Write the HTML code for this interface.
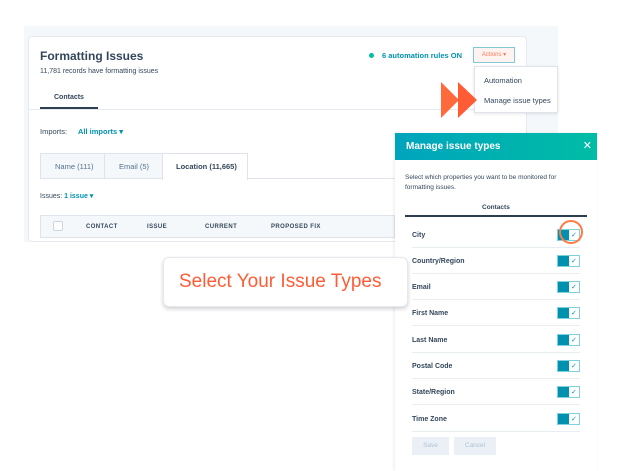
<!DOCTYPE html>
<html><head><style>
*{margin:0;padding:0;box-sizing:border-box}
body{width:637px;height:471px;background:#fff;position:relative;overflow:hidden;font-family:"Liberation Sans",sans-serif;color:#33475b}
.a{position:absolute}
.bg{left:24px;top:26px;width:534px;height:216px;background:#f5f8fa}
.card{left:28px;top:36px;width:499px;height:206px;background:#fff;border:1px solid #e5eaf0;border-radius:4px}
.teal{color:#0091ae;font-weight:bold}
.row{left:412px;width:168px;height:26px;border-bottom:1px solid #e8edf2;font-size:7px;font-weight:bold;color:#33475b;line-height:28px}
.tg{position:absolute;right:0;top:7px;width:23px;height:12px;border:1px solid #7fd1de;background:#fff}
.tg:before{content:"";position:absolute;left:0;top:0;width:11px;height:10px;background:#0091ae}
.tg:after{content:"✓";position:absolute;left:13px;top:-8px;font-size:7px;color:#0091ae;font-weight:normal}
</style></head><body>
<div class="a bg"></div>
<div class="a card"></div>
<div class="a" style="left:40px;top:49px;font-size:12px;font-weight:bold">Formatting Issues</div>
<div class="a" style="left:40px;top:68px;font-size:7px">11,781 records have formatting issues</div>
<div class="a" style="left:54px;top:94px;font-size:7px;font-weight:bold">Contacts</div>
<div class="a" style="left:40px;top:107px;width:58px;height:3px;background:#2d3e50"></div>
<div class="a" style="left:29px;top:109px;width:497px;height:1px;background:#e5eaf0"></div>
<div class="a" style="left:369px;top:53px;width:5px;height:5px;border-radius:50%;background:#00bda5"></div>
<div class="a teal" style="left:382px;top:51px;font-size:7.5px">6 automation rules ON</div>
<div class="a" style="left:473px;top:47px;width:42px;height:16px;border:1px solid #7fc8d6;background:#fef3f0;color:#ff7a59;font-size:6px;text-align:center;line-height:14px">Actions ▾</div>
<div class="a" style="left:474px;top:66px;width:84px;height:47px;background:#fff;border:1px solid #dfe3eb;box-shadow:0 1px 3px rgba(0,0,0,.1)"></div>
<div class="a" style="left:484px;top:76px;font-size:7.5px">Automation</div>
<div class="a" style="left:484px;top:96px;font-size:7.5px">Manage issue types</div>
<svg class="a" style="left:440px;top:81px" width="40" height="38"><polygon points="1,1 19,19 1,37" fill="#ff6a3d"/><polygon points="18,1 37,19 18,37" fill="#ff5c35"/></svg>
<div class="a" style="left:40px;top:127px;font-size:7.5px">Imports:</div>
<div class="a teal" style="left:78px;top:127px;font-size:7.5px">All imports ▾</div>
<div class="a" style="left:40px;top:153px;width:208px;height:26px;border:1px solid #dfe3eb;background:#f5f8fa"></div>
<div class="a" style="left:104px;top:153px;width:1px;height:26px;background:#dfe3eb"></div>
<div class="a" style="left:162px;top:153px;width:86px;height:27px;background:#fff;border:1px solid #dfe3eb;border-bottom:none"></div>
<div class="a" style="left:248px;top:178px;width:147px;height:1px;background:#dfe3eb"></div>
<div class="a" style="left:55px;top:162px;font-size:7.5px;color:#516f90">Name (111)</div>
<div class="a" style="left:119px;top:162px;font-size:7.5px;color:#516f90">Email (5)</div>
<div class="a" style="left:176px;top:162px;font-size:7.5px;font-weight:bold">Location (11,665)</div>
<div class="a" style="left:40px;top:192px;font-size:7px">Issues: <span class="teal">1 issue ▾</span></div>
<div class="a" style="left:40px;top:215px;width:355px;height:23px;background:#f5f8fa;border:1px solid #dfe3eb"></div>
<div class="a" style="left:53px;top:221px;width:10px;height:10px;background:#fff;border:1px solid #cbd6e2;border-radius:2px"></div>
<div class="a" style="left:86px;top:224px;font-size:6px;font-weight:bold;letter-spacing:.4px">CONTACT</div>
<div class="a" style="left:147px;top:224px;font-size:6px;font-weight:bold;letter-spacing:.4px">ISSUE</div>
<div class="a" style="left:205px;top:224px;font-size:6px;font-weight:bold;letter-spacing:.4px">CURRENT</div>
<div class="a" style="left:271px;top:224px;font-size:6px;font-weight:bold;letter-spacing:.4px">PROPOSED FIX</div>
<div class="a" style="left:395px;top:133px;width:202px;height:338px;background:#fff;box-shadow:-1px 0 3px rgba(0,0,0,.08)"></div>
<div class="a" style="left:395px;top:133px;width:202px;height:27px;background:linear-gradient(90deg,#00a4bd,#00bda5);color:#fff;font-weight:bold;font-size:10px;line-height:27px;padding-left:11px">Manage issue types<span style="position:absolute;right:5px;font-weight:normal;font-size:11px">✕</span></div>
<div class="a" style="left:405px;top:173px;font-size:6.5px;line-height:10px;width:160px">Select which properties you want to be monitored for formatting issues.</div>
<div class="a" style="left:482px;top:204px;font-size:6.5px;font-weight:bold">Contacts</div>
<div class="a" style="left:405px;top:215px;width:182px;height:2px;background:#2d3e50"></div>
<div class="a row" style="top:222px">City<div class="tg"></div></div>
<div class="a row" style="top:248px">Country/Region<div class="tg"></div></div>
<div class="a row" style="top:274px">Email<div class="tg"></div></div>
<div class="a row" style="top:300px">First Name<div class="tg"></div></div>
<div class="a row" style="top:327px">Last Name<div class="tg"></div></div>
<div class="a row" style="top:353px">Postal Code<div class="tg"></div></div>
<div class="a row" style="top:379px">State/Region<div class="tg"></div></div>
<div class="a row" style="top:406px">Time Zone<div class="tg"></div></div>
<div class="a" style="left:559px;top:220px;width:24px;height:24px;border:2px solid #ff7a45;border-radius:50%"></div>
<div class="a" style="left:412px;top:437px;width:37px;height:18px;background:#eaf0f6;color:#b0c1d4;font-size:6.5px;text-align:center;line-height:18px">Save</div>
<div class="a" style="left:454px;top:437px;width:42px;height:18px;background:#eaf0f6;color:#b0c1d4;font-size:6.5px;text-align:center;line-height:18px">Cancel</div>
<div class="a" style="left:163px;top:257px;width:245px;height:50px;background:#fff;border:1px solid #e5e8ee;border-radius:6px;box-shadow:0 2px 4px rgba(0,0,0,.18);color:#ff5c35;font-size:19px;line-height:48px;padding-left:15px">Select Your Issue Types</div>
</body></html>
